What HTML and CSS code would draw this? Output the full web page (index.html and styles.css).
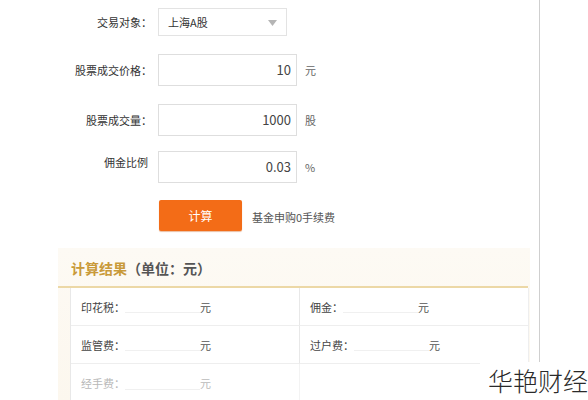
FILE: index.html
```html
<!DOCTYPE html>
<html lang="zh-CN">
<head>
<meta charset="utf-8">
<title>印花税计算器</title>
<link rel="stylesheet" href="styles.css">
</head>
<body>
<div class="page">
  <div class="form">
    <div class="row row-select">
      <label class="label">交易对象：</label>
      <div class="select">
        <span>上海A股</span>
        <svg class="arrow" width="9" height="6" viewBox="0 0 9 6"><path d="M0 0 H9 L4.5 6 Z" fill="#b5b5b5"/></svg>
      </div>
    </div>
    <div class="row row-price">
      <label class="label">股票成交价格：</label>
      <div class="input">10</div>
      <span class="unit">元</span>
    </div>
    <div class="row row-qty">
      <label class="label">股票成交量：</label>
      <div class="input">1000</div>
      <span class="unit">股</span>
    </div>
    <div class="row row-rate">
      <label class="label label-top">佣金比例</label>
      <div class="input">0.03</div>
      <span class="unit">%</span>
    </div>
    <div class="row row-btn">
      <span class="label"></span>
      <button class="btn">计算</button>
      <span class="note">基金申购0手续费</span>
    </div>
  </div>

  <div class="result">
    <div class="result-head"><span class="gold">计算结果</span>（单位：元）</div>
    <div class="table">
      <div class="cell"><span class="k">印花税：</span><span class="blank"></span><span class="y">元</span></div>
      <div class="cell"><span class="k">佣金：</span><span class="blank"></span><span class="y">元</span></div>
      <div class="cell"><span class="k">监管费：</span><span class="blank"></span><span class="y">元</span></div>
      <div class="cell"><span class="k">过户费：</span><span class="blank"></span><span class="y">元</span></div>
      <div class="cell faded"><span class="k">经手费：</span><span class="blank"></span><span class="y">元</span></div>
      <div class="cell faded"></div>
    </div>
  </div>
</div>
<div class="watermark">华艳财经</div>
</body>
</html>
```

FILE: styles.css
```css
html, body {
  margin: 0;
  padding: 0;
  background: #fff;
}
body {
  width: 588px;
  height: 400px;
  overflow: hidden;
  position: relative;
  font-family: "Noto Sans CJK SC", "Noto Sans", sans-serif;
  color: #333;
}
.page {
  width: 539px;
  height: 400px;
  border-right: 1px solid #cfcfcf;
  box-sizing: content-box;
}
.form {
  padding-top: 8px;
}
.row {
  display: flex;
  align-items: center;
}
.row-price { margin-top: 18px; }
.row-qty { margin-top: 18px; }
.row-rate { margin-top: 15px; align-items: flex-start; }
.row-btn { margin-top: 17px; }
.label {
  width: 152px;
  flex: none;
  text-align: right;
  font-size: 11px;
  color: #333;
  margin-right: 6px;
}
.label-top {
  padding-top: 3px;
  margin-right: 10px;
  width: 148px;
}
.select {
  width: 129px;
  height: 28px;
  box-sizing: border-box;
  border: 1px solid #e3e3e3;
  background: #fff;
  display: flex;
  align-items: center;
  justify-content: space-between;
  padding: 0 9px 0 9px;
  font-size: 11px;
  color: #333;
}
.arrow { margin-top: 1px; }
.input {
  width: 139px;
  height: 32px;
  box-sizing: border-box;
  border: 1px solid #dedede;
  background: #fff;
  text-align: right;
  padding-right: 5px;
  font-size: 13px;
  line-height: 30px;
  color: #444;
}
.unit {
  margin-left: 8px;
  font-size: 11px;
  color: #666;
}
.row-rate .unit { margin-top: 8px; }
.btn {
  width: 83px;
  height: 31px;
  margin-left: 1px;
  border: none;
  border-radius: 2px;
  background: #f36c17;
  color: #fff;
  font-family: inherit;
  font-size: 12px;
  padding: 0;
  box-shadow: 0 1px 1px rgba(200, 90, 20, 0.4);
}
.note {
  margin-left: 10px;
  font-size: 11px;
  color: #555;
  margin-top: 2px;
}
.result {
  margin-top: 17px;
  margin-left: 58px;
  width: 472px;
  background: linear-gradient(#fdfaf4, #fcf7ee);
  padding-left: 12px;
  box-sizing: border-box;
}
.result-head {
  height: 38px;
  line-height: 40px;
  font-size: 14px;
  font-weight: bold;
  color: #555;
  border-bottom: 2px solid #ecd8a6;
  margin-right: 2px;
  margin-left: -12px;
  padding-left: 13px;
}
.gold { color: #c99a3a; }
.table {
  display: grid;
  grid-template-columns: 229px 229px;
  background: #fff;
  border-left: 1px solid #e8e8e8;
  width: 458px;
  box-sizing: border-box;
}
.cell {
  height: 38px;
  box-sizing: border-box;
  border-bottom: 1px solid #eeeeee;
  display: flex;
  align-items: center;
  padding-left: 10px;
  font-size: 11px;
  color: #444;
}
.cell:nth-child(odd) { border-right: 1px solid #e8e8e8; }
.cell:nth-child(even) { border-right: 1px solid #eeeeee; }
.k { flex: none; }
.blank {
  display: inline-block;
  width: 75px;
  height: 12px;
  border-bottom: 1px solid #f0f0f0;
}
.y { color: #555; }
.faded { color: #b8b8b8; border-bottom: none; }
.faded .y { color: #bbb; }
.faded:nth-child(odd) { border-right: 1px solid #f3f3f3; }
.watermark {
  position: absolute;
  right: 0;
  bottom: 0;
  width: 108px;
  height: 38px;
  background: #fff;
  font-family: "Noto Sans CJK SC", sans-serif;
  font-weight: 300;
  font-size: 25px;
  line-height: 36px;
  color: #2a2a2a;
  text-align: right;
}
```
